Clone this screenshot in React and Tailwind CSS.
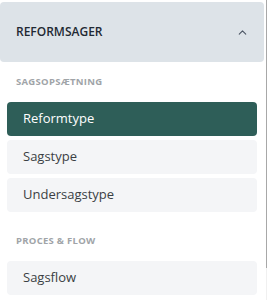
import { ChevronUp } from 'lucide-react';

const groups = [
  { title: 'Sagsopsætning', items: ['Reformtype', 'Sagstype', 'Undersagstype'] },
  { title: 'Proces & Flow', items: ['Sagsflow'] },
];

export default function App() {
  const active = 'Reformtype';

  return (
    <div className="flex w-[268px] h-[300px] overflow-hidden bg-white font-['Open_Sans',sans-serif]">
      <div className="w-[266px] pt-[2px] pr-[2px]">
        {/* Section header */}
        <div className="flex items-center justify-between h-[60px] pl-4 pr-[15px] rounded bg-[#dde3e8]">
          <span className="text-[12px] font-semibold text-[#1f2933]">REFORMSAGER</span>
          <ChevronUp size={13} strokeWidth={2} className="text-[#4b5563]" />
        </div>

        {groups.map((group, gi) => (
          <div key={group.title} className={gi === 0 ? 'pt-[13px]' : 'pt-[22px]'}>
            <p className="px-4 text-[9.5px] font-bold uppercase tracking-[0.03em] text-[#a0a4a8] leading-[14px]">
              {group.title}
            </p>
            <div className="flex flex-col gap-1 mt-[13px] px-[7px]">
              {group.items.map((item) => (
                <div
                  key={item}
                  className={`h-[34px] flex items-center px-4 rounded text-[13px] ${
                    item === active ? 'bg-[#2e5e58] text-white' : 'bg-[#f4f5f7] text-[#3b3f44]'
                  }`}
                >
                  {item}
                </div>
              ))}
            </div>
          </div>
        ))}
      </div>

      {/* thin scrollbar */}
      <div className="w-[2px] flex flex-col">
        <div className="h-[268px] w-[1px] bg-[#a8a8a8]" />
        <div className="flex-1 w-[1px] bg-[#f0f0f0]" />
      </div>
    </div>
  );
}
